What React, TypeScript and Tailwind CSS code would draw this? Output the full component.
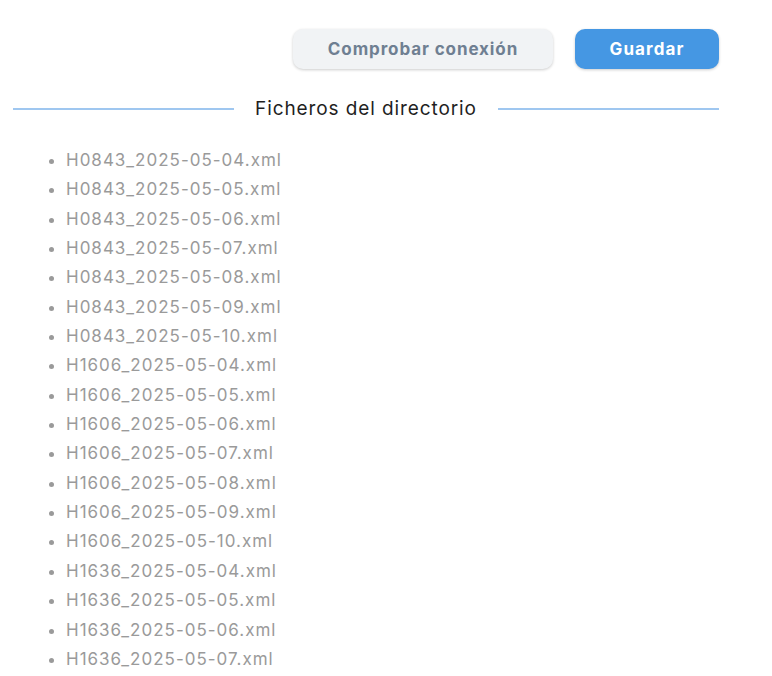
const files = [
  'H0843_2025-05-04.xml',
  'H0843_2025-05-05.xml',
  'H0843_2025-05-06.xml',
  'H0843_2025-05-07.xml',
  'H0843_2025-05-08.xml',
  'H0843_2025-05-09.xml',
  'H0843_2025-05-10.xml',
  'H1606_2025-05-04.xml',
  'H1606_2025-05-05.xml',
  'H1606_2025-05-06.xml',
  'H1606_2025-05-07.xml',
  'H1606_2025-05-08.xml',
  'H1606_2025-05-09.xml',
  'H1606_2025-05-10.xml',
  'H1636_2025-05-04.xml',
  'H1636_2025-05-05.xml',
  'H1636_2025-05-06.xml',
  'H1636_2025-05-07.xml',
]

export default function App() {
  return (
    <div className="w-[772px] h-[676px] overflow-hidden bg-white font-['Inter',sans-serif]">
      <div className="w-[706px] ml-[13px] pt-[29px]">
        {/* Actions */}
        <div className="flex justify-end gap-[22px]">
          <button className="w-[260px] h-[40px] pt-[1px] rounded-[10px] bg-[#f1f3f5] shadow-[0_1px_3px_rgba(0,0,0,0.2)] text-[17px] tracking-[0.9px] font-bold text-[#6f7f92]">
            Comprobar conexión
          </button>
          <button className="w-[144px] h-[40px] pt-[1px] rounded-[10px] bg-[#4597e3] shadow-[0_1px_3px_rgba(0,0,0,0.2)] text-[17px] tracking-[1.1px] font-bold text-white">
            Guardar
          </button>
        </div>

        {/* Divider */}
        <div className="flex items-center mt-[24px] h-[32px]">
          <div className="flex-1 h-[2px] bg-[#9fc7f0]" />
          <span className="px-[21px] text-[19px] tracking-[0.9px] text-[#1f1f1f]">Ficheros del directorio</span>
          <div className="flex-1 h-[2px] bg-[#9fc7f0]" />
        </div>

        {/* File list */}
        <ul className="mt-[21px] pl-[53px] list-disc marker:text-[#9a9a9a] text-[17px] tracking-[1px] leading-[29.35px] text-[#9a9a9a]">
          {files.map((f) => (
            <li key={f}>{f}</li>
          ))}
        </ul>
      </div>
    </div>
  )
}
